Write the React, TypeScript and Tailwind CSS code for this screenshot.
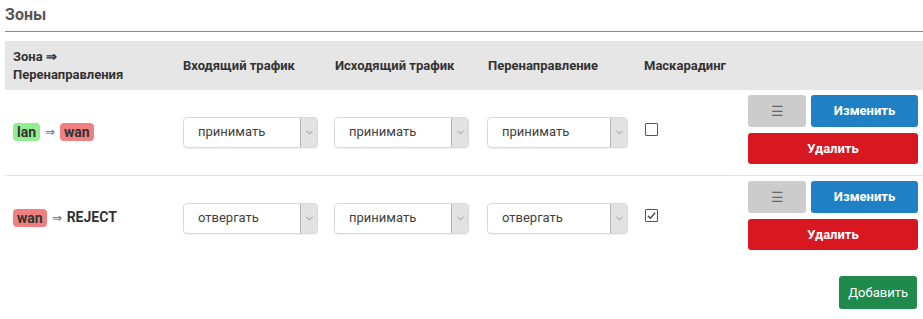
import { ChevronDown } from "lucide-react";

type Zone = {
  src: { name: string; color: string };
  dest: { name: string; color?: string };
  input: string;
  output: string;
  forward: string;
  masq: boolean;
};

const zones: Zone[] = [
  {
    src: { name: "lan", color: "bg-[#90ee90]" },
    dest: { name: "wan", color: "bg-[#f08080]" },
    input: "принимать",
    output: "принимать",
    forward: "принимать",
    masq: false,
  },
  {
    src: { name: "wan", color: "bg-[#f08080]" },
    dest: { name: "REJECT" },
    input: "отвергать",
    output: "принимать",
    forward: "отвергать",
    masq: true,
  },
];

const cols = "grid grid-cols-[170px_151px_153px_157px_104px_183px]";

function Select({ value, width }: { value: string; width: string }) {
  return (
    <div
      className={`flex h-[31px] ${width} items-stretch overflow-hidden rounded-[4px] border border-[#d8d8d8] bg-white shadow-[0_1px_1px_rgba(0,0,0,0.06)]`}
    >
      <div className="flex flex-1 items-center pl-[14px] text-[13px] text-[#404040]">{value}</div>
      <div className="flex w-[17px] items-center justify-center border-l border-[#b5b5b5] bg-[#e2e2e2]">
        <ChevronDown className="h-[11px] w-[11px] text-[#777]" strokeWidth={1.6} />
      </div>
    </div>
  );
}

function Badge({ name, color }: { name: string; color: string }) {
  return (
    <span className={`rounded-[4px] ${color} px-[4px] py-[1px] text-[14px] font-bold leading-[16px] text-[#333]`}>
      {name}
    </span>
  );
}

function Checkbox({ checked }: { checked: boolean }) {
  return (
    <div className="flex h-[13px] w-[13px] items-center justify-center rounded-[1px] border border-[#555] bg-white">
      {checked && (
        <svg viewBox="0 0 12 12" className="h-[11px] w-[11px]">
          <path d="M2 6.2 L4.7 9 L10 3" fill="none" stroke="#444" strokeWidth="1.4" />
        </svg>
      )}
    </div>
  );
}

function ZoneRow({ zone, last }: { zone: Zone; last: boolean }) {
  return (
    <div className={`${cols} pt-[5px] pb-[11px] ${last ? "" : "border-b border-[#e3e3e3]"}`}>
      <div className="flex items-center gap-[5px] pl-[8px] pt-[4px]">
        <Badge name={zone.src.name} color={zone.src.color} />
        <span className="text-[12px] text-[#5b6e8a]">⇒</span>
        {zone.dest.color ? (
          <Badge name={zone.dest.name} color={zone.dest.color} />
        ) : (
          <span className="text-[14px] font-bold text-[#333]">{zone.dest.name}</span>
        )}
      </div>
      <div className="flex items-center pl-[8px] pt-[5px]">
        <Select value={zone.input} width="w-[135px]" />
      </div>
      <div className="flex items-center pl-[8px] pt-[5px]">
        <Select value={zone.output} width="w-[135px]" />
      </div>
      <div className="flex items-center pl-[8px] pt-[5px]">
        <Select value={zone.forward} width="w-[141px]" />
      </div>
      <div className="flex items-center pl-[9px]">
        <Checkbox checked={zone.masq} />
      </div>
      <div className="flex flex-col gap-[6px] pl-[8px] pr-[5px]">
        <div className="flex gap-[5px]">
          <button className="flex h-[32px] w-[58px] items-center justify-center rounded-[3px] bg-[#cccccc] text-[14px] text-[#666]">
            ☰
          </button>
          <button className="h-[32px] flex-1 rounded-[3px] bg-[#1f81c3] text-[13px] font-bold text-white">
            Изменить
          </button>
        </div>
        <button className="h-[31px] w-full rounded-[3px] bg-[#d91720] text-[13px] font-bold text-white">
          Удалить
        </button>
      </div>
    </div>
  );
}

export default function App() {
  return (
    <div className="h-[319px] w-[923px] bg-white font-['Roboto',sans-serif]">
      <div className="pl-[5px]">
        <h2 className="pb-[6px] pt-[4px] text-[16px] font-bold leading-[21px] text-[#555]">Зоны</h2>
        <div className="h-[1px] bg-[#1fb5ad]" />
        <div className="mt-[9px]">
          <div className={`${cols} h-[49px] items-center bg-[#e6e6e6] text-[13px] font-bold leading-[18px] text-[#333]`}>
            <div className="pl-[8px]">
              Зона ⇒
              <br />
              Перенаправления
            </div>
            <div className="pl-[8px]">Входящий трафик</div>
            <div className="pl-[9px]">Исходящий трафик</div>
            <div className="pl-[9px]">Перенаправление</div>
            <div className="pl-[8px]">Маскарадинг</div>
            <div />
          </div>
          {zones.map((z, i) => (
            <ZoneRow key={i} zone={z} last={i === zones.length - 1} />
          ))}
          <div className="flex justify-end pr-[6px] pt-[15px]">
            <button className="h-[33px] rounded-[3px] bg-[#1f8a4c] px-[9px] text-[13px] text-white">
              Добавить
            </button>
          </div>
        </div>
      </div>
    </div>
  );
}
